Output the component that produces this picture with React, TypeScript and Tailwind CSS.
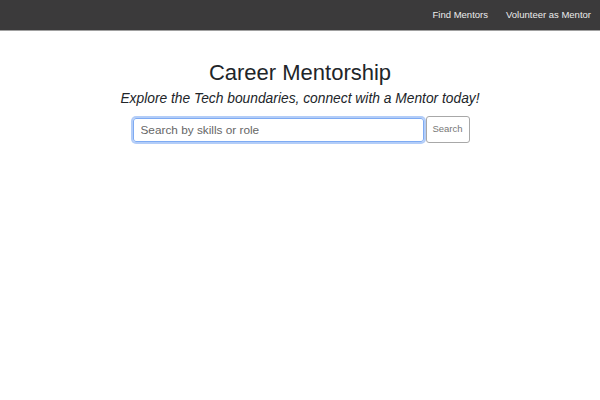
import { useState } from "react"

export default function App() {
  const [query, setQuery] = useState("")

  const navItems = ["Find Mentors", "Volunteer as Mentor"]

  return (
    <div className="min-h-screen bg-white font-['Liberation_Sans',Arial,sans-serif] text-[#212529]">
      {/* Top bar */}
      <nav className="h-[31px] bg-[#3b3a3b] border-b border-[#a0a0a0] flex items-center justify-end pr-[9px] gap-[18px]">
        {navItems.map((item) => (
          <a key={item} href="#" className="text-[9.5px] text-[#ececec]">
            {item}
          </a>
        ))}
      </nav>

      {/* Hero */}
      <main className="pt-[29px] flex flex-col items-center">
        <h1 className="text-[22px] leading-[25px] font-normal">Career Mentorship</h1>
        <p className="mt-[5px] text-[13.8px] leading-[17px] italic">
          Explore the Tech boundaries, connect with a Mentor today!
        </p>

        <div className="mt-[9px] flex items-start">
          <input
            value={query}
            onChange={(e) => setQuery(e.target.value)}
            placeholder="Search by skills or role"
            className="ml-[2px] mt-[2px] w-[291px] h-[24px] pl-[7px] rounded-[3px] border border-[#7eabf3] shadow-[0_0_0_2px_#b3cdf8] text-[11.8px] text-[#333] placeholder:text-[#666] outline-none"
          />
          <button className="ml-[2px] w-[44px] h-[27px] bg-white border border-[#a8a8a8] rounded-[3px] text-[9.5px] text-[#777]">
            Search
          </button>
        </div>
      </main>
    </div>
  )
}
